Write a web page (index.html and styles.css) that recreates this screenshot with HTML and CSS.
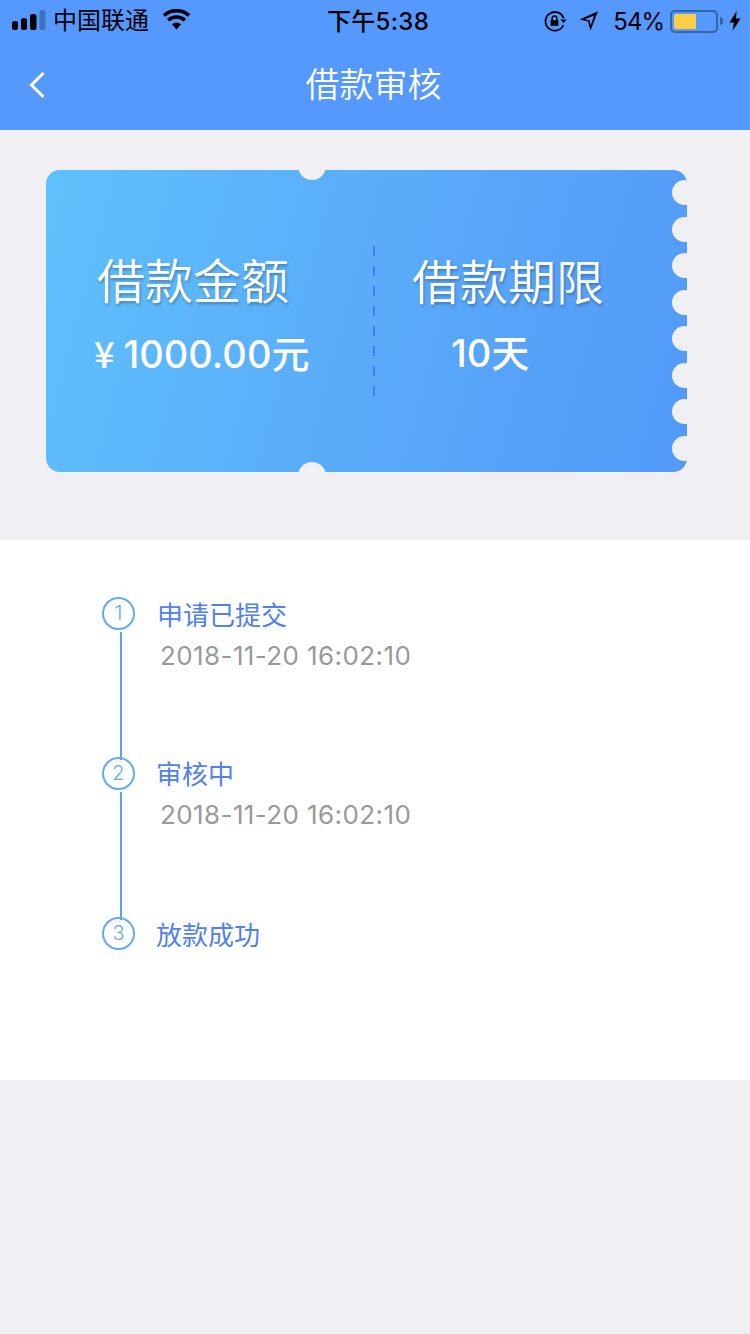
FILE: index.html
```html
<!DOCTYPE html>
<html lang="zh-CN">
<head>
    <meta charset="UTF-8">
    <title>借款审核</title>
    <link rel="stylesheet" href="styles.css">
</head>
<body>
<div id="header">
    <div class="status">
        <div class="status-left">
            <svg class="signal" width="34" height="20" viewBox="0 0 34 20">
                <rect x="0" y="11" width="6" height="9" rx="2.5"/>
                <rect x="9" y="8" width="6" height="12" rx="2.5"/>
                <rect x="18" y="4" width="6.5" height="16" rx="2.5"/>
                <rect x="27.5" y="0" width="6" height="20" rx="2.5" fill="#3f74b8"/>
            </svg>
            <span class="carrier">中国联通</span>
            <svg class="wifi" width="29" height="21" viewBox="0 0 28 21">
                <path d="M14 20.5l-4.6-5.2a7 7 0 0 1 9.2 0z"/>
                <path d="M6.8 12.6L4.4 10a14.4 14.4 0 0 1 19.2 0l-2.4 2.6a10.8 10.8 0 0 0-14.4 0z"/>
                <path d="M2.6 7.8L0.2 5.2a20.6 20.6 0 0 1 27.6 0l-2.4 2.6a17 17 0 0 0-22.8 0z"/>
            </svg>
        </div>
        <div class="status-time">下午5:38</div>
        <div class="status-right">
            <svg class="lock" width="23" height="22" viewBox="0 0 23 22">
                <path d="M19.6 8.2A9.3 9.3 0 1 0 19.4 15" fill="none" stroke="#000" stroke-width="1.8"/>
                <path d="M16.4 9.6h6.2l-3 3.4z"/>
                <path d="M7.4 10V8.4a3.1 3.1 0 0 1 6.2 0V10h.8v5.8H6.6V10zM8.9 10h3.2V8.4a1.6 1.6 0 0 0-3.2 0z"/>
            </svg>
            <svg class="arrow" width="20" height="20" viewBox="0 0 20 20">
                <path d="M19 0.3L11.5 19.5 9 10.5 0.5 8.5zM15 4.5L6 8.2l4.6 1 1.2 5z" fill-rule="evenodd"/>
            </svg>
            <span class="percent">54%</span>
            <div class="battery"><div class="battery-level"></div></div>
            <div class="battery-cap"></div>
            <svg class="bolt" width="12" height="20" viewBox="0 0 12 20">
                <path d="M7.6 0L0.4 11.4h4.4L3.6 20l8-12.4H7z"/>
            </svg>
        </div>
    </div>
    <div class="nav">
        <svg class="back" width="18" height="28" viewBox="0 0 18 28">
            <path d="M15.5 2L3.5 14l12 12" fill="none" stroke="#fff" stroke-width="3"/>
        </svg>
        <div class="nav-title">借款审核</div>
    </div>
</div>

<div id="ticket-wrap">
    <div class="ticket">
        <i class="notch notch-top"></i>
        <i class="notch notch-bottom"></i>
        <div class="scallops">
            <i></i><i></i><i></i><i></i><i></i><i></i><i></i><i></i>
        </div>
        <div class="ticket-col ticket-left">
            <div class="ticket-label">借款金额</div>
            <div class="ticket-value"><span class="yen">¥</span>1000.00元</div>
        </div>
        <div class="ticket-line"></div>
        <div class="ticket-col ticket-right">
            <div class="ticket-label">借款期限</div>
            <div class="ticket-value">10天</div>
        </div>
    </div>
</div>

<div id="steps">
    <div class="step">
        <div class="step-num">1</div>
        <div class="step-text">
            <div class="step-title">申请已提交</div>
            <div class="step-date">2018-11-20 16:02:10</div>
        </div>
    </div>
    <div class="step">
        <div class="step-num">2</div>
        <div class="step-text">
            <div class="step-title">审核中</div>
            <div class="step-date">2018-11-20 16:02:10</div>
        </div>
    </div>
    <div class="step step-last">
        <div class="step-num">3</div>
        <div class="step-text">
            <div class="step-title">放款成功</div>
        </div>
    </div>
</div>
</body>
</html>
```

FILE: styles.css
```css
* {
    margin: 0;
    padding: 0;
    box-sizing: border-box;
}

html, body {
    height: 100%;
}

body {
    width: 750px;
    height: 1334px;
    overflow: hidden;
    background: #efeff4;
    font-family: "Liberation Sans", "Noto Sans CJK SC", sans-serif;
}

#header {
    height: 130px;
    background: #5599ff;
}

.status {
    height: 42px;
    padding: 0 9px 0 12px;
    display: flex;
    align-items: center;
    justify-content: space-between;
    position: relative;
    color: #000;
    font-size: 24px;
}

.status svg {
    display: block;
    fill: #000;
}

.status-left, .status-right {
    display: flex;
    align-items: center;
}

.signal {
    margin-bottom: 2px;
}

.carrier {
    margin-left: 7px;
    margin-bottom: 5px;
    font-family: "Noto Sans CJK SC", sans-serif;
}

.wifi {
    margin-left: 13px;
    margin-bottom: 3px;
}

.status-time {
    position: absolute;
    left: 327px;
    top: 3px;
    line-height: 38px;
    font-family: "Inter", "Noto Sans CJK SC", sans-serif;
    font-weight: 500;
    letter-spacing: 0.3px;
}

.arrow {
    margin-left: 12px;
}

.percent {
    margin-left: 14px;
    font-family: "Inter", sans-serif;
    font-size: 24px;
    letter-spacing: -1px;
}

.battery {
    width: 48px;
    height: 23px;
    margin-left: 6px;
    padding: 2px;
    border: 2px solid #34669f;
    border-radius: 5px;
}

.battery-level {
    width: 22px;
    height: 15px;
    background: #fccd45;
    border-radius: 2px 0 0 2px;
}

.battery-cap {
    width: 3px;
    height: 8px;
    margin-left: 2px;
    background: #34669f;
    border-radius: 0 3px 3px 0;
}

.bolt {
    margin-left: 6px;
}

.nav {
    height: 88px;
    display: flex;
    align-items: center;
    justify-content: center;
    position: relative;
}

.back {
    position: absolute;
    left: 28px;
    top: 29px;
}

.nav-title {
    color: #fff;
    font-size: 34px;
    font-family: "Noto Sans CJK SC", sans-serif;
    font-weight: 350;
    margin-right: 3px;
    margin-bottom: 8px;
}

#ticket-wrap {
    height: 410px;
    padding: 40px 0 0 46px;
}

.ticket {
    width: 641px;
    height: 302px;
    border-radius: 14px;
    overflow: hidden;
    position: relative;
    display: flex;
    align-items: center;
    background: linear-gradient(105deg, #5fc1fb 0%, #5aabfa 50%, #5299f8 100%);
}

.notch {
    position: absolute;
    left: 252px;
    width: 28px;
    height: 28px;
    border-radius: 50%;
    background: #efeff4;
}

.notch-top {
    top: -18px;
}

.notch-bottom {
    bottom: -18px;
}

.scallops {
    position: absolute;
    right: -10px;
    top: 10px;
    display: flex;
    flex-direction: column;
    gap: 11.5px;
}

.scallops i {
    display: block;
    width: 25px;
    height: 25px;
    border-radius: 50%;
    background: #efeff4;
}

.ticket-col {
    padding-bottom: 18px;
    color: #fff;
    font-family: "Noto Sans CJK SC", sans-serif;
    white-space: nowrap;
}

.ticket-left {
    width: 327px;
    padding-left: 51px;
}

.ticket-right {
    padding-left: 37px;
}

.ticket-label {
    font-size: 48px;
    line-height: 66px;
    font-weight: 350;
    text-shadow: 1px 2px 3px rgba(0, 0, 0, 0.28);
}

.ticket-value {
    margin-top: 15px;
    font-family: "Inter", "Noto Sans CJK SC", sans-serif;
    font-size: 38px;
    line-height: 52px;
    font-weight: 500;
}

.ticket-left .ticket-value {
    margin-left: -3px;
}

.ticket-right .ticket-value {
    margin-left: 39px;
}

.yen {
    font-family: "Noto Sans CJK SC", sans-serif;
    font-size: 36px;
    font-weight: 500;
    margin-right: 9px;
}

.ticket-line {
    width: 2px;
    height: 152px;
    margin-top: 2px;
    background: repeating-linear-gradient(to bottom, #3f80ea 0, #3f80ea 10px, transparent 10px, transparent 20px);
}

#steps {
    height: 540px;
    padding: 57px 0 0 102px;
    background: #fff;
}

.step {
    height: 160px;
    display: flex;
    position: relative;
}

.step::after {
    content: "";
    position: absolute;
    left: 18px;
    top: 35px;
    width: 2px;
    height: 128px;
    background: #5aa0fb;
}

.step-last::after {
    display: none;
}

.step-num {
    width: 33px;
    height: 33px;
    flex: none;
    border: 2px solid #62aafc;
    border-radius: 50%;
    color: #62aafc;
    font-size: 20px;
    line-height: 29px;
    text-align: center;
    font-family: "Inter", sans-serif;
    font-weight: 300;
}

.step-text {
    margin-left: 22px;
    font-family: "Noto Sans CJK SC", sans-serif;
}

.step-title {
    height: 34px;
    color: #4f80f5;
    font-size: 26px;
    line-height: 34px;
}

.step:nth-child(2) .step-title {
    margin-left: -1px;
    margin-top: -1px;
    margin-bottom: 1px;
}

.step:nth-child(3) .step-title {
    margin-left: -1px;
}

.step-date {
    margin-top: 8px;
    margin-left: 3px;
    color: #999;
    font-size: 26px;
    line-height: 34px;
    letter-spacing: 0.4px;
    font-family: "Inter", sans-serif;
}
```
